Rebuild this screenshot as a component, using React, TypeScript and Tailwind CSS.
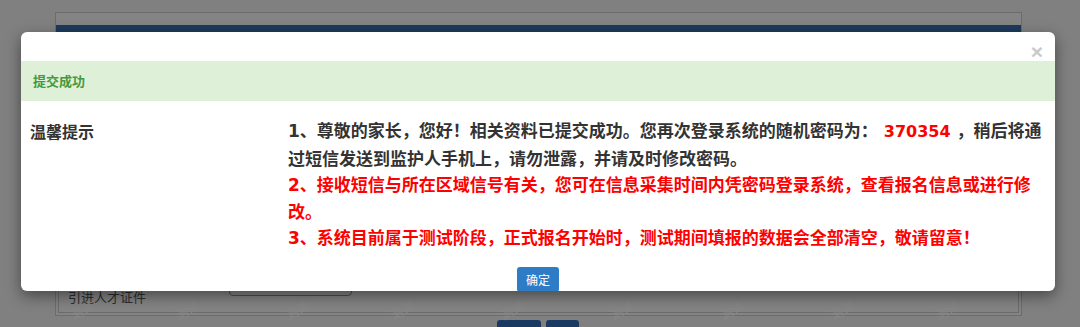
import React from 'react'

const marks = [70, 175, 285, 390, 500, 610, 720, 830, 935]

export default function App() {
  return (
    <div className="relative w-[1080px] h-[327px] overflow-hidden bg-[#808080] font-['Liberation_Sans','Noto_Sans_CJK_SC',sans-serif]">
      {/* dimmed page behind the dialog */}
      <div className="ml-[55px] mt-[12px] w-[967px] h-[304px] border border-[#6c6c6c] bg-[#848484] flex flex-col">
        <div className="mt-[12px] h-[40px] bg-[#1d3a5c]" />
        <div className="flex-1 mx-[2px] mb-[2px] border border-[#6c6c6c] flex flex-col justify-end">
          <div className="h-[50px] flex items-start pl-[9px]">
            <span className="w-[161px] mt-[26px] text-[13px] leading-[20px] text-[#2e2e2e]">引进人才证件</span>
            <div className="mt-[4px] w-[123px] h-[30px] border border-[#4e4e4e] rounded-[4px]" />
          </div>
        </div>
      </div>
      <div className="mt-[4px] ml-[497px] flex gap-[5px]">
        <div className="w-[44px] h-[30px] rounded-[3px] bg-[#1b3a62]" />
        <div className="w-[33px] h-[30px] rounded-[3px] bg-[#1b3a62]" />
      </div>
      {marks.map((x, i) => (
        <span
          key={i}
          className="absolute top-[304px] -rotate-[30deg] text-[12px] leading-none text-[#888888] font-['Noto_Sans_CJK_SC',sans-serif]"
          style={{ left: x }}
        >
          测试
        </span>
      ))}

      {/* dialog */}
      <div className="absolute left-[21px] top-[32px] w-[1034px] h-[259px] rounded-[6px] bg-white overflow-hidden shadow-[0_5px_15px_rgba(0,0,0,0.45)]">
        <div className="h-[29px] flex justify-end pr-[12px] pt-[9px]">
          <span className="text-[21px] leading-none font-bold text-[#c9c9c9] font-['Liberation_Sans',sans-serif]">×</span>
        </div>
        <div className="h-[40px] bg-[#dff0d8] flex items-center pl-[12px]">
          <span className="text-[13px] font-bold text-[#45993d] font-['Noto_Sans_CJK_SC',sans-serif]">提交成功</span>
        </div>
        <div className="flex pt-[17px]">
          <div className="w-[267px] pl-[9px] text-[16px] leading-[26.5px] font-bold text-[#333] font-['Noto_Sans_CJK_SC',sans-serif]">
            温馨提示
          </div>
          <div className="w-[757px] text-[17px] leading-[26.5px] font-bold font-['DejaVu_Sans','Noto_Sans_CJK_SC',sans-serif]">
            <p className="text-[#333]">
              1、尊敬的家长，您好！相关资料已提交成功。您再次登录系统的随机密码为： <span className="text-[16px] text-[#f00]">370354</span> ，稍后将通过短信发送到监护人手机上，请勿泄露，并请及时修改密码。
            </p>
            <p className="text-[#f00]">2、接收短信与所在区域信号有关，您可在信息采集时间内凭密码登录系统，查看报名信息或进行修改。</p>
            <p className="text-[#f00]">3、系统目前属于测试阶段，正式报名开始时，测试期间填报的数据会全部清空，敬请留意！</p>
          </div>
        </div>
        <div className="mt-[15.5px] flex justify-center">
          <button className="w-[42px] h-[25px] rounded-[3px] bg-[#2e7bc6] text-white text-[12px] font-['Noto_Sans_CJK_SC',sans-serif]">
            确定
          </button>
        </div>
      </div>
    </div>
  )
}
